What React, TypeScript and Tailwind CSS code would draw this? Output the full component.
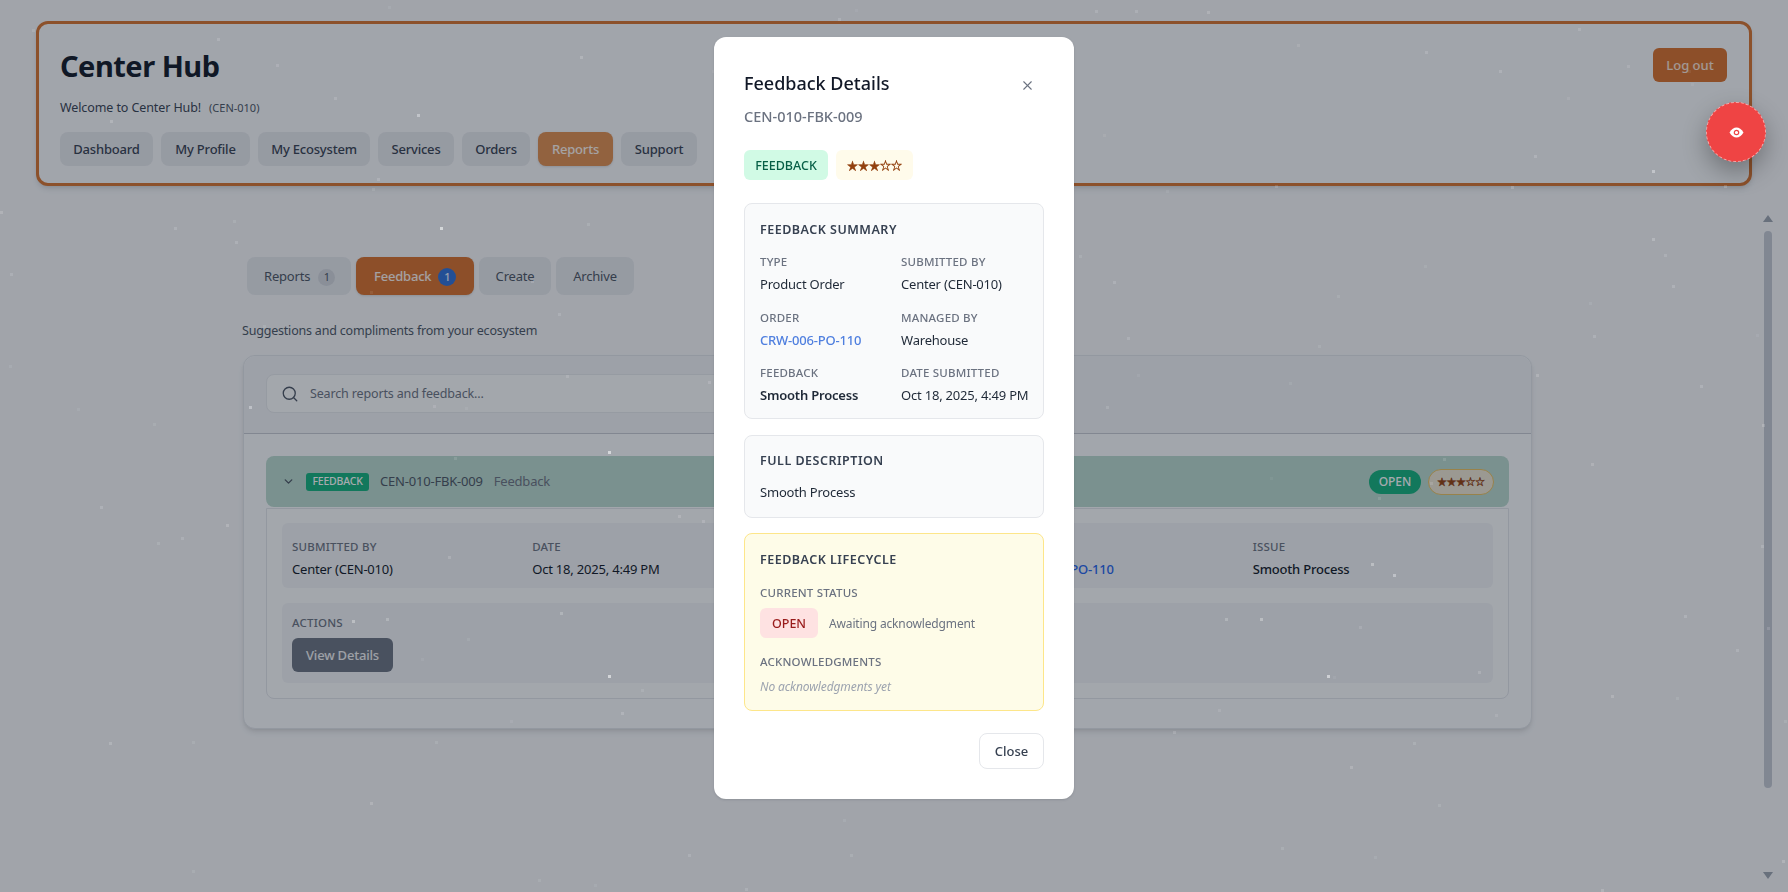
import React from "react";
import { Search, ChevronDown, X } from "lucide-react";

const nav = ["Dashboard", "My Profile", "My Ecosystem", "Services", "Orders", "Reports", "Support"];
const navW = ["w-[93px]", "w-[89px]", "w-[112px]", "w-[76px]", "w-[68px]", "w-[75px]", "w-[76px]"];

const known: [number, number, number][] = [
  [608, 451, 0.55], [608, 675, 0.55], [249, 406, 0.35], [440, 227, 0.55], [417, 114, 0.35], [1327, 675, 0.5],
  [1393, 574, 0.35], [1652, 170, 0.35], [1652, 238, 0.2], [352, 620, 0.3], [386, 618, 0.2], [560, 612, 0.2],
  [1371, 563, 0.3], [1260, 618, 0.3], [1225, 618, 0.2],
];
const dots = [...known];
let seed = 17;
const rnd = () => {
  seed = (seed * 16807) % 2147483647;
  return seed / 2147483647;
};
for (let i = 0; i < 130; i++) {
  dots.push([Math.round(rnd() * 1788), Math.round(rnd() * 892), 0.05 + rnd() * 0.12]);
}

function Stars({ cls }: { cls: string }) {
  return <span className={"font-['Noto_Sans_CJK_JP',sans-serif] text-[#92400e] [-webkit-text-stroke:0.35px_#92400e] " + cls}>★★★☆☆</span>;
}

function Field({ label, value, cls = "" }: { label: string; value: string; cls?: string }) {
  return (
    <div>
      <div className="h-4 text-[11.5px] leading-4 tracking-[0.2px] font-medium text-[#6b7280]">{label}</div>
      <div className={"mt-1 h-5 whitespace-nowrap text-[13px] leading-5 tracking-[-0.2px] text-[#1f2937] " + cls}>{value}</div>
    </div>
  );
}

function RowField({ label, value, cls = "" }: { label: string; value: string; cls?: string }) {
  return (
    <div>
      <div className="h-4 text-[11.5px] leading-4 tracking-[0.2px] font-medium text-[#6b7280]">{label}</div>
      <div className={"mt-[4px] h-5 whitespace-nowrap text-[13px] leading-5 tracking-[-0.2px] " + cls}>{value}</div>
    </div>
  );
}

export default function App() {
  return (
    <div className="relative h-[892px] w-[1788px] overflow-hidden bg-[#f5f6f8] font-['Noto_Sans','Liberation_Sans',sans-serif]">
      <header className="relative mx-[36px] mt-[21px] h-[165px] rounded-[12px] border-[3px] border-[#d4722f] bg-[#f6f7f9] px-[21px] pt-[24px] shadow-md">
        <div className="flex items-start justify-between pr-[1px]">
          <h1 className="h-9 text-[29px] font-bold leading-9 tracking-[-0.5px] text-[#111827]">Center Hub</h1>
          <button className="h-[34px] w-[74px] rounded-[6px] bg-[#d6702c] pt-[2px] text-[13px] font-medium text-white/80">Log out</button>
        </div>
        <div className="mt-[14px] flex h-5 items-center gap-2">
          <span className="text-[12.5px] leading-5 tracking-[-0.1px] text-[#374151]">Welcome to Center Hub!</span>
          <span className="text-[11px] leading-5 text-[#4b5563]">(CEN-010)</span>
        </div>
        <nav className="mt-[14px] flex gap-2">
          {nav.map((n, i) => (
            <button
              key={n}
              className={
                "h-[34px] rounded-[8px] pt-[2px] text-[13px] font-medium tracking-[-0.2px] " +
                navW[i] +
                (n === "Reports" ? " bg-[#de8d4e] text-white/90 shadow-sm" : " bg-[#e5e7eb] text-[#374151]")
              }
            >
              {n}
            </button>
          ))}
        </nav>
      </header>

      <main className="ml-[243px] w-[1289px]">
        <div className="ml-[4px] mt-[71px] flex h-[38px] gap-[5px]">
          <div className="flex w-[104px] items-center gap-[8px] rounded-[8px] bg-[#e5e7eb] pl-[17px] pt-[2px] text-[13px] tracking-[-0.2px] text-[#4b5563]">
            Reports
            <span className="flex h-[17px] w-[17px] items-center justify-center rounded-full bg-[#d1d5db] text-[11px]">1</span>
          </div>
          <div className="flex w-[118px] items-center gap-[7px] rounded-[8px] bg-[#d6702c] pl-[18px] pt-[2px] text-[13px] font-medium tracking-[-0.2px] text-white/90 shadow-sm">
            Feedback
            <span className="flex h-[18px] w-[18px] items-center justify-center rounded-full bg-[#2f6fd6] text-[11px]">1</span>
          </div>
          <div className="flex w-[72px] items-center justify-center rounded-[8px] bg-[#e5e7eb] pt-[2px] text-[13px] tracking-[-0.2px] text-[#4b5563]">Create</div>
          <div className="flex w-[78px] items-center justify-center rounded-[8px] bg-[#e5e7eb] pt-[2px] text-[13px] tracking-[-0.2px] text-[#4b5563]">Archive</div>
        </div>

        <p className="-ml-px mt-[26px] h-5 text-[12.5px] leading-5 tracking-[-0.2px] text-[#4b5563]">Suggestions and compliments from your ecosystem</p>

        <section className="mt-[14px] h-[374px] rounded-[12px] border border-[#dfe2e7] bg-[#f8f9fb] shadow-md">
          <div className="h-[78px] rounded-t-[12px] border-b border-[#c4c8d0] bg-[#eff1f4] px-[22px] pt-[18px]">
            <div className="flex h-[39px] w-[760px] items-center gap-[11px] rounded-[8px] border border-[#e5e7eb] bg-[#f9fafb] pl-[14px]">
              <Search size={18} strokeWidth={1.75} className="text-[#4b5563]" />
              <span className="pt-[2px] text-[12.5px] tracking-[-0.15px] text-[#6b7280]">Search reports and feedback...</span>
            </div>
          </div>
          <div className="px-[22px] pt-[22px]">
            <div className="flex h-[51px] items-center justify-between rounded-[8px] bg-[#b8d8cc] pl-[16px] pr-[15px]">
              <div className="flex items-center">
                <ChevronDown size={13} strokeWidth={2.5} className="text-[#4b5563]" />
                <span className="ml-[11px] flex h-[18px] w-[63px] items-center justify-center rounded-[3px] bg-[#14b07c] text-[10.5px] font-medium tracking-[-0.2px] text-white">FEEDBACK</span>
                <span className="ml-[11px] text-[13px] tracking-[-0.2px] text-[#4b5563]">CEN-010-FBK-009</span>
                <span className="ml-[11px] text-[13px] tracking-[-0.2px] text-[#6b7280]">Feedback</span>
              </div>
              <div className="flex items-center gap-[7px]">
                <span className="flex h-6 w-[52px] items-center justify-center rounded-full bg-[#14b07c] text-[12px] font-medium text-white">OPEN</span>
                <span className="flex h-[26px] w-[66px] items-center justify-center rounded-full border border-[#e8c060] bg-[#ece5d2]">
                  <Stars cls="text-[9.5px] leading-none" />
                </span>
              </div>
            </div>
            <div className="mt-px h-[191px] rounded-b-[8px] border border-[#dfe2e7] bg-[#f9fafb] px-[15px] pt-[14px]">
              <div className="grid h-[65px] grid-cols-5 gap-x-[10px] rounded-[6px] bg-[#eff1f4] px-[10px] pt-[16px]">
                <RowField label="SUBMITTED BY" value="Center (CEN-010)" cls="text-[#111827]" />
                <RowField label="DATE" value="Oct 18, 2025, 4:49 PM" cls="text-[#111827]" />
                <div />
                <RowField label="ORDER ID" value="CRW-006-PO-110" cls="font-medium text-[#2563eb]" />
                <RowField label="ISSUE" value="Smooth Process" cls="font-medium text-[#111827]" />
              </div>
              <div className="mt-[15px] h-[80px] rounded-[6px] bg-[#eff1f4] px-[10px] pt-[12px]">
                <div className="h-4 text-[11.5px] font-medium leading-4 tracking-[0.2px] text-[#6b7280]">ACTIONS</div>
                <button className="mt-[7px] h-[34px] w-[101px] rounded-[6px] bg-[#6b7280] pt-[2px] text-[13px] font-medium tracking-[-0.2px] text-white/90">View Details</button>
              </div>
            </div>
          </div>
        </section>
      </main>

      {/* custom scrollbar */}
      <div className="absolute left-[1763px] top-[215px] h-0 w-0 border-x-[5px] border-b-[7px] border-x-transparent border-b-[#9ca3af]" />
      <div className="absolute left-[1764px] top-[231px] h-[557px] w-[8px] rounded-full bg-[#c3c8d2]" />
      <div className="absolute left-[1763px] top-[872px] h-0 w-0 border-x-[5px] border-t-[7px] border-x-transparent border-t-[#9ca3af]" />

      {/* overlay + modal */}
      <div className="absolute inset-0 flex justify-center bg-[#111827]/[.37] pt-[37px] backdrop-blur-[0.6px]">
        {dots.map((d, i) => (
          <span
            key={i}
            className="absolute h-[3px] w-[3px] bg-white"
            style={{ left: d[0], top: d[1], opacity: d[2] }}
          />
        ))}
        <div className="relative h-[762px] w-[360px] rounded-[12px] bg-white px-[30px] pt-[32px] shadow-sm">
          <div className="flex h-7 items-center justify-between">
            <h2 className="text-[18px] font-medium leading-7 text-[#111827]">Feedback Details</h2>
            <X size={15} strokeWidth={1.75} className="mr-[9px] mt-[4px] text-[#6b7280]" />
          </div>
          <div className="mt-[9px] h-5 text-[14.5px] font-medium leading-5 text-[#6b7280]">CEN-010-FBK-009</div>

          <div className="mt-[24px] flex h-[30px] gap-[8px]">
            <span className="flex w-[84px] items-center justify-center rounded-[6px] bg-[#d1fae5] pt-[2px] text-[12.5px] font-medium text-[#065f46]">FEEDBACK</span>
            <span className="flex w-[77px] items-center justify-center rounded-[6px] bg-[#fffbeb]">
              <Stars cls="text-[11px] leading-none" />
            </span>
          </div>

          <div className="mt-[23px] h-[216px] rounded-[8px] border border-[#e5e7eb] bg-[#f9fafb] px-[15px] pt-[15px]">
            <div className="h-5 pt-[1px] text-[12.5px] font-semibold leading-5 tracking-[0.5px] text-[#374151]">FEEDBACK SUMMARY</div>
            <div className="mt-[15px] grid grid-cols-[125px_1fr] gap-x-[16px] gap-y-[15.5px]">
              <Field label="TYPE" value="Product Order" />
              <Field label="SUBMITTED BY" value="Center (CEN-010)" />
              <Field label="ORDER" value="CRW-006-PO-110" cls="font-medium !text-[#4f7fdf]" />
              <Field label="MANAGED BY" value="Warehouse" />
              <Field label="FEEDBACK" value="Smooth Process" cls="font-semibold" />
              <Field label="DATE SUBMITTED" value="Oct 18, 2025, 4:49 PM" />
            </div>
          </div>

          <div className="mt-[16px] h-[83px] rounded-[8px] border border-[#e5e7eb] bg-[#f9fafb] px-[15px] pt-[15px]">
            <div className="h-5 text-[12.5px] font-semibold leading-5 tracking-[0.5px] text-[#374151]">FULL DESCRIPTION</div>
            <div className="mt-[11px] h-5 text-[13px] leading-5 tracking-[-0.2px] text-[#1f2937]">Smooth Process</div>
          </div>

          <div className="mt-[15px] h-[178px] rounded-[8px] border border-[#fde68a] bg-[#fefce8] px-[15px] pt-[15px]">
            <div className="h-5 pt-[1px] text-[12.5px] font-semibold leading-5 tracking-[0.5px] text-[#374151]">FEEDBACK LIFECYCLE</div>
            <div className="mt-[15px] h-4 pt-[1px] text-[11.5px] font-medium leading-4 tracking-[0.2px] text-[#6b7280]">CURRENT STATUS</div>
            <div className="mt-[8px] flex h-[30px] items-center gap-[11px]">
              <span className="flex h-[30px] w-[58px] items-center justify-center rounded-[6px] bg-[#fee2e2] pt-[2px] text-[12.5px] font-medium text-[#991b1b]">OPEN</span>
              <span className="pt-[1px] text-[12px] tracking-[-0.15px] text-[#6b7280]">Awaiting acknowledgment</span>
            </div>
            <div className="mt-[15px] h-4 pt-[1px] text-[11.5px] font-medium leading-4 tracking-[0.2px] text-[#6b7280]">ACKNOWLEDGMENTS</div>
            <div className="mt-[8px] h-5 text-[12px] italic leading-5 tracking-[-0.1px] text-[#9ca3af]">No acknowledgments yet</div>
          </div>

          <div className="mt-[22px] flex justify-end">
            <button className="h-[36px] w-[65px] rounded-[8px] border border-[#e5e7eb] bg-white pt-[2px] text-[13px] font-medium text-[#374151]">Close</button>
          </div>
        </div>
      </div>

      {/* floating button */}
      <button className="absolute left-[1706px] top-[102px] flex h-[60px] w-[60px] items-center justify-center rounded-full border border-dashed border-[#fca5a5] bg-[#ef4444] shadow-[0_10px_24px_rgba(0,0,0,0.3)]">
        <svg width="15" height="11" viewBox="0 0 15 11">
          <path d="M0.5 5.5C2.5 2 5 0.5 7.5 0.5S12.5 2 14.5 5.5C12.5 9 10 10.5 7.5 10.5S2.5 9 0.5 5.5Z" fill="white" />
          <circle cx="7.5" cy="5.5" r="2.2" fill="none" stroke="#ef4444" strokeWidth="1.2" />
        </svg>
      </button>
    </div>
  );
}
